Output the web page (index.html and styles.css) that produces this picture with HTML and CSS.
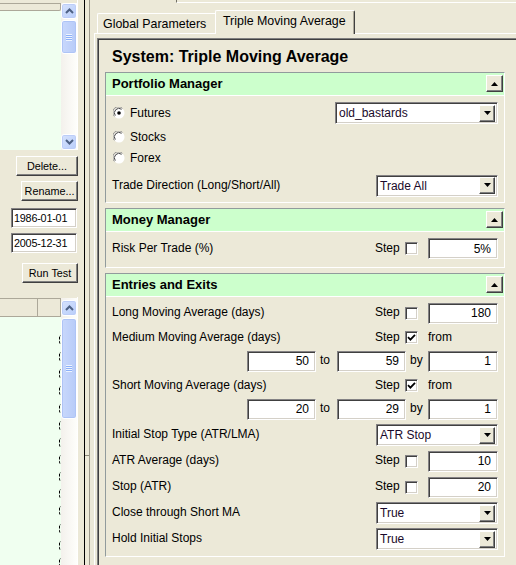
FILE: index.html
```html
<!DOCTYPE html>
<html>
<head>
<meta charset="utf-8">
<title>Triple Moving Average</title>
<link rel="stylesheet" href="styles.css">
</head>
<body>
<div class="app">
  <aside class="left">
    <div class="list list-top">
      <div class="list-main">
        <div class="list-head top-head"></div>
        <div class="list-body"></div>
      </div>
      <div class="vscroll">
        <div class="sb-btn"><svg width="9" height="6" viewBox="0 0 9 6"><path d="M1 5 L4.5 1.5 L8 5" fill="none" stroke="#4d6185" stroke-width="2"/></svg></div>
        <div class="sb-thumb thumb-top"><span class="grip"></span></div>
        <div class="sb-track"></div>
        <div class="sb-btn"><svg width="9" height="6" viewBox="0 0 9 6"><path d="M1 1 L4.5 4.5 L8 1" fill="none" stroke="#4d6185" stroke-width="2"/></svg></div>
      </div>
    </div>
    <div class="controls">
      <div class="btn btn-delete">Delete...</div>
      <div class="btn btn-rename">Rename...</div>
      <div class="field date">1986-01-01</div>
      <div class="field date">2005-12-31</div>
      <div class="btn btn-run">Run Test</div>
    </div>
    <div class="list list-bottom">
      <div class="list-main">
        <div class="list-head bottom-head"><span class="hcol hcol-1"></span><span class="hcol hcol-2"></span></div>
        <div class="list-body values">
          <span class="tick"></span><span class="tick"></span><span class="tick"></span><span class="tick"></span><span class="tick"></span><span class="tick"></span><span class="tick"></span><span class="tick"></span><span class="tick"></span><span class="tick"></span><span class="tick"></span><span class="tick"></span><span class="tick"></span><span class="tick"></span>
        </div>
      </div>
      <div class="vscroll vscroll-bottom">
        <div class="sb-btn"><svg width="9" height="6" viewBox="0 0 9 6"><path d="M1 5 L4.5 1.5 L8 5" fill="none" stroke="#4d6185" stroke-width="2"/></svg></div>
        <div class="sb-thumb thumb-bottom"><span class="grip"></span></div>
        <div class="sb-track"></div>
      </div>
    </div>
  </aside>
  <div class="splitter"></div>
  <main class="right">
    <div class="topbox"></div>
    <div class="tabs">
      <div class="tab">Global Parameters</div>
      <div class="tab active">Triple Moving Average</div>
    </div>
    <div class="pane">
      <div class="panel">
        <div class="title">System: Triple Moving Average</div>

        <section class="group group-portfolio">
          <div class="group-head"><span>Portfolio Manager</span><span class="rbtn"><svg width="7" height="4" viewBox="0 0 7 4"><path d="M0 4 L3.5 0 L7 4 Z" fill="#000"/></svg></span></div>
          <div class="group-body">
            <div class="row h22">
              <span class="radio"><svg width="12" height="12" viewBox="0 0 12 12"><circle cx="6" cy="6" r="5.5" fill="#fff"/><path d="M1.4 9.4 A5.5 5.5 0 0 1 9.4 1.4" fill="none" stroke="#8c8c8c"/><path d="M2.3 8.6 A4.5 4.5 0 0 1 8.6 2.3" fill="none" stroke="#444"/><circle cx="6" cy="6" r="1.8" fill="#000"/></svg></span>
              <span class="label">Futures</span>
              <div class="combo combo-wide"><span class="combo-text">old_bastards</span><span class="dbtn"><svg width="7" height="4" viewBox="0 0 7 4"><path d="M0 0 L7 0 L3.5 4 Z" fill="#000"/></svg></span></div>
            </div>
            <div class="row h22 gap2">
              <span class="radio"><svg width="12" height="12" viewBox="0 0 12 12"><circle cx="6" cy="6" r="5.5" fill="#fff"/><path d="M1.4 9.4 A5.5 5.5 0 0 1 9.4 1.4" fill="none" stroke="#8c8c8c"/><path d="M2.3 8.6 A4.5 4.5 0 0 1 8.6 2.3" fill="none" stroke="#444"/></svg></span>
              <span class="label">Stocks</span>
            </div>
            <div class="row h20">
              <span class="radio"><svg width="12" height="12" viewBox="0 0 12 12"><circle cx="6" cy="6" r="5.5" fill="#fff"/><path d="M1.4 9.4 A5.5 5.5 0 0 1 9.4 1.4" fill="none" stroke="#8c8c8c"/><path d="M2.3 8.6 A4.5 4.5 0 0 1 8.6 2.3" fill="none" stroke="#444"/></svg></span>
              <span class="label">Forex</span>
            </div>
            <div class="row h23 gap6">
              <span class="label grow">Trade Direction (Long/Short/All)</span>
              <div class="combo"><span class="combo-text">Trade All</span><span class="dbtn"><svg width="7" height="4" viewBox="0 0 7 4"><path d="M0 0 L7 0 L3.5 4 Z" fill="#000"/></svg></span></div>
            </div>
          </div>
        </section>

        <section class="group group-money">
          <div class="group-head"><span>Money Manager</span><span class="rbtn"><svg width="7" height="4" viewBox="0 0 7 4"><path d="M0 4 L3.5 0 L7 4 Z" fill="#000"/></svg></span></div>
          <div class="group-body">
            <div class="row h21">
              <span class="label grow">Risk Per Trade (%)</span>
              <span class="step">Step</span><span class="cb"></span>
              <div class="field num">5%</div>
            </div>
          </div>
        </section>

        <section class="group group-entries">
          <div class="group-head"><span>Entries and Exits</span><span class="rbtn"><svg width="7" height="4" viewBox="0 0 7 4"><path d="M0 4 L3.5 0 L7 4 Z" fill="#000"/></svg></span></div>
          <div class="group-body">
            <div class="row h26">
              <span class="label grow">Long Moving Average (days)</span>
              <span class="step">Step</span><span class="cb"></span>
              <div class="field num">180</div>
            </div>
            <div class="row h23">
              <span class="label grow">Medium Moving Average (days)</span>
              <span class="step">Step</span><span class="cb"><svg width="9" height="9" viewBox="0 0 9 9"><path d="M1 4.2 L3.4 6.6 L8 1.8" fill="none" stroke="#000" stroke-width="1.8"/></svg></span>
              <span class="from">from</span>
            </div>
            <div class="row h24 range">
              <div class="field num narrow">50</div><span class="sep">to</span>
              <div class="field num narrow">59</div><span class="sep sep-by">by</span>
              <div class="field num">1</div>
            </div>
            <div class="row h25">
              <span class="label grow">Short Moving Average (days)</span>
              <span class="step">Step</span><span class="cb"><svg width="9" height="9" viewBox="0 0 9 9"><path d="M1 4.2 L3.4 6.6 L8 1.8" fill="none" stroke="#000" stroke-width="1.8"/></svg></span>
              <span class="from">from</span>
            </div>
            <div class="row h22 range">
              <div class="field num narrow">20</div><span class="sep">to</span>
              <div class="field num narrow">29</div><span class="sep sep-by">by</span>
              <div class="field num">1</div>
            </div>
            <div class="row h26 gap2">
              <span class="label grow">Initial Stop Type (ATR/LMA)</span>
              <div class="combo"><span class="combo-text">ATR Stop</span><span class="dbtn"><svg width="7" height="4" viewBox="0 0 7 4"><path d="M0 0 L7 0 L3.5 4 Z" fill="#000"/></svg></span></div>
            </div>
            <div class="row h26">
              <span class="label grow">ATR Average (days)</span>
              <span class="step">Step</span><span class="cb"></span>
              <div class="field num">10</div>
            </div>
            <div class="row h26">
              <span class="label grow">Stop (ATR)</span>
              <span class="step">Step</span><span class="cb"></span>
              <div class="field num">20</div>
            </div>
            <div class="row h26">
              <span class="label grow">Close through Short MA</span>
              <div class="combo"><span class="combo-text">True</span><span class="dbtn"><svg width="7" height="4" viewBox="0 0 7 4"><path d="M0 0 L7 0 L3.5 4 Z" fill="#000"/></svg></span></div>
            </div>
            <div class="row h26">
              <span class="label grow">Hold Initial Stops</span>
              <div class="combo"><span class="combo-text">True</span><span class="dbtn"><svg width="7" height="4" viewBox="0 0 7 4"><path d="M0 0 L7 0 L3.5 4 Z" fill="#000"/></svg></span></div>
            </div>
          </div>
        </section>
      </div>
    </div>
  </main>
</div>
</body>
</html>
```

FILE: styles.css
```css
* { box-sizing: border-box; }
html, body { margin: 0; padding: 0; }
body {
  width: 516px;
  height: 565px;
  overflow: hidden;
  background: #ece9d8;
  font-family: "Liberation Sans", Arial, sans-serif;
  font-size: 12px;
  color: #000;
}
.app { display: flex; width: 516px; height: 565px; overflow: hidden; }

/* ---------- left column ---------- */
.left { width: 78px; flex: none; display: flex; flex-direction: column; font-size: 10.8px; }
.list { display: flex; border-right: 1px solid #fff; }
.list-top { height: 150px; flex: none; padding-top: 3px; }
.list-main { width: 61px; display: flex; flex-direction: column; }
.list-head {
  height: 8px;
  background: #ece9d8;
  border-top: 1px solid #aca899;
  border-bottom: 1px solid #aca899;
  border-right: 1px solid #aca899;
  border-radius: 0 0 2px 0;
}
.list-body { flex: 1; background: #f0fff0; }
.vscroll {
  width: 16px;
  display: flex;
  flex-direction: column;
  background: linear-gradient(to right, #f3f1ec, #fefefb);
}
.sb-btn {
  width: 16px; height: 16px;
  flex: none;
  border: 1px solid #fff;
  border-radius: 3px;
  background: linear-gradient(135deg, #d6e2fd, #b8cdfa);
  box-shadow: inset 0 0 0 1px #bccdf8;
  display: flex; align-items: center; justify-content: center;
}
.sb-thumb {
  width: 16px; flex: none;
  border: 1px solid #fff;
  border-radius: 3px;
  background: linear-gradient(to right, #c9d8fc, #b7cbf8);
  box-shadow: inset 0 0 0 1px #aec4f6;
  display: flex; align-items: center; justify-content: center;
}
.thumb-top { height: 34px; margin-top: 1px; }
.thumb-bottom { height: 101px; margin-top: 2px; }
.grip {
  width: 6px; height: 7px;
  background: repeating-linear-gradient(to bottom, #eef4fe 0 1px, #8cb0f8 1px 2px);
}
.sb-track { flex: 1; }

.controls {
  height: 147px;
  flex: none;
  display: flex;
  flex-direction: column;
  align-items: flex-end;
  padding-top: 6px;
}
.btn {
  height: 20px;
  background: #ece9d8;
  border: 1px solid #fff;
  border-right-color: #404040;
  border-bottom-color: #404040;
  box-shadow: inset -1px -1px 0 #808080;
  display: flex; align-items: center; justify-content: center;
  line-height: 1;
}
.btn-delete { width: 62px; }
.btn-rename { width: 57px; margin-top: 5px; }
.btn-run { width: 56px; margin-top: 10px; }
.field {
  height: 21px;
  background: #fff;
  border: 1px solid;
  border-color: #848284 #fff #fff #848284;
  box-shadow: inset 1px 1px 0 #404040, inset -1px -1px 0 #d4d0c8;
  display: flex; align-items: center;
  white-space: nowrap;
}
.date { width: 66px; height: 20px; padding-left: 2px; margin-top: 7px; margin-right: 1px; letter-spacing: -0.2px; }
.date + .date { margin-top: 5px; }

.list-bottom { flex: 1; padding-top: 1px; }
.bottom-head {
  height: 19px;
  display: flex;
  border-top: 1px solid #aca899;
  border-radius: 0;
}
.hcol { height: 100%; border-right: 1px solid #aca899; }
.hcol-1 { width: 39px; }
.hcol-2 { width: 22px; border-right: none; }
.values {
  display: flex;
  flex-direction: column;
  align-items: flex-start;
  padding-top: 18px;
  padding-left: 59px;
  overflow: hidden;
}
.tick {
  flex: none;
  width: 2px;
  height: 9px;
  margin-bottom: 8.15px;
  border-left: 1px dashed #000;
  border-radius: 2px 0 0 2px;
}
.vscroll-bottom { padding-top: 2px; }

/* ---------- splitter ---------- */
.splitter {
  width: 11px;
  flex: none;
  background:
    linear-gradient(#000, #000) no-repeat 6px 0 / 1px 565px,
    linear-gradient(#8b8878, #8b8878) no-repeat 7px 455px / 4px 1px;
}

/* ---------- right column ---------- */
.right {
  width: 440px;
  flex: none;
  display: flex;
  flex-direction: column;
  border-left: 1px solid #9d9a8c;
  padding-left: 4px;
}
.topbox {
  height: 3px;
  margin-left: 82px;
  border-left: 1px solid #716f64;
  border-bottom: 1px solid #fff;
}
.tabs {
  height: 30px;
  display: flex;
  align-items: flex-end;
  padding-left: 3px;
}
.tab {
  height: 20px;
  width: 118px;
  padding-left: 5px;
  border-top: 1px solid #fff;
  border-left: 1px solid #fff;
  border-radius: 2px 0 0 0;
  display: flex; align-items: center;
  font-size: 12.4px;
  white-space: nowrap;
}
.tab.active {
  height: 24px;
  width: 140px;
  padding-left: 7px;
  padding-bottom: 3px;
  margin-bottom: -1px;
  border-right: 1px solid #404040;
  box-shadow: inset -1px 0 0 #aca899;
  border-radius: 2px 2px 0 0;
  background: #ece9d8;
  position: relative;
  z-index: 1;
}
.pane {
  flex: 1;
  border-top: 1px solid #fff;
  border-left: 1px solid #fff;
  padding: 4px 0 0 2px;
}
.panel {
  height: 100%;
  border-top: 1px solid #808080;
  border-left: 1px solid #808080;
  box-shadow: inset 1px 1px 0 #404040;
  padding: 8px 0 0 7px;
}
.title {
  height: 20px;
  line-height: 20px;
  padding-left: 7px;
  font-size: 16px;
  font-weight: bold;
  margin-bottom: 5px;
}

.group {
  width: 400px;
  border: 1px solid;
  border-color: #919b9c #fff #fff #919b9c;
  margin-bottom: 5px;
}
.group-head {
  height: 23px;
  background: #ccffcc;
  border-bottom: 1px solid #fff;
  display: flex;
  align-items: center;
  justify-content: space-between;
  padding: 0 1px 1px 6px;
  font-size: 13px;
  font-weight: bold;
}
.rbtn, .dbtn {
  width: 17px; height: 17px;
  background: #ece9d8;
  border: 1px solid;
  border-color: #fff #404040 #404040 #fff;
  box-shadow: inset -1px -1px 0 #808080;
  display: flex; align-items: center; justify-content: center;
}
.dbtn { width: 16px; height: 17px; padding-bottom: 1px; }
.group-body { padding: 0 6px 0 6px; }
.group-portfolio .group-body { padding-top: 6px; padding-bottom: 5px; }
.group-money .group-body { padding-top: 6px; padding-bottom: 8px; }
.group-entries .group-body { padding-top: 3px; padding-bottom: 4px; }

.row { display: flex; align-items: center; }
.h20 { height: 20px; }
.h21 { height: 21px; }
.h22 { height: 22px; }
.h23 { height: 23px; }
.h24 { height: 24px; }
.h25 { height: 25px; }
.h26 { height: 26px; }
.gap2 { margin-top: 2px; }
.gap6 { margin-top: 6px; }
.label { padding-bottom: 2px; white-space: nowrap; }
.grow { flex: 1; }
.radio { width: 12px; height: 12px; margin: 0 5px 0 1px; display: flex; }
.radio + .label { flex: 1; padding-bottom: 0; }

.combo {
  width: 122px;
  height: 22px;
  background: #fff;
  border: 1px solid;
  border-color: #848284 #fff #fff #848284;
  box-shadow: inset 1px 1px 0 #404040, inset -1px -1px 0 #d4d0c8;
  display: flex;
  align-items: center;
  padding: 2px 2px 2px 3px;
}
.combo-wide { width: 163px; }
.combo-text { flex: 1; white-space: nowrap; color: #1a0a2a; }

.step { width: 30px; padding-bottom: 2px; }
.cb {
  width: 13px; height: 13px;
  margin-right: 10px;
  background: #fff;
  border: 1px solid;
  border-color: #848284 #fff #fff #848284;
  box-shadow: inset 1px 1px 0 #404040, inset -1px -1px 0 #d4d0c8;
  display: flex; align-items: center; justify-content: center;
}
.from { width: 70px; padding-bottom: 2px; }
.num { width: 70px; justify-content: flex-end; padding-right: 6px; }
.narrow { width: 69px; }
.range { justify-content: flex-end; }
.sep { width: 21px; padding-left: 4px; padding-bottom: 2px; }
.sep-by { width: 22px; }
```
